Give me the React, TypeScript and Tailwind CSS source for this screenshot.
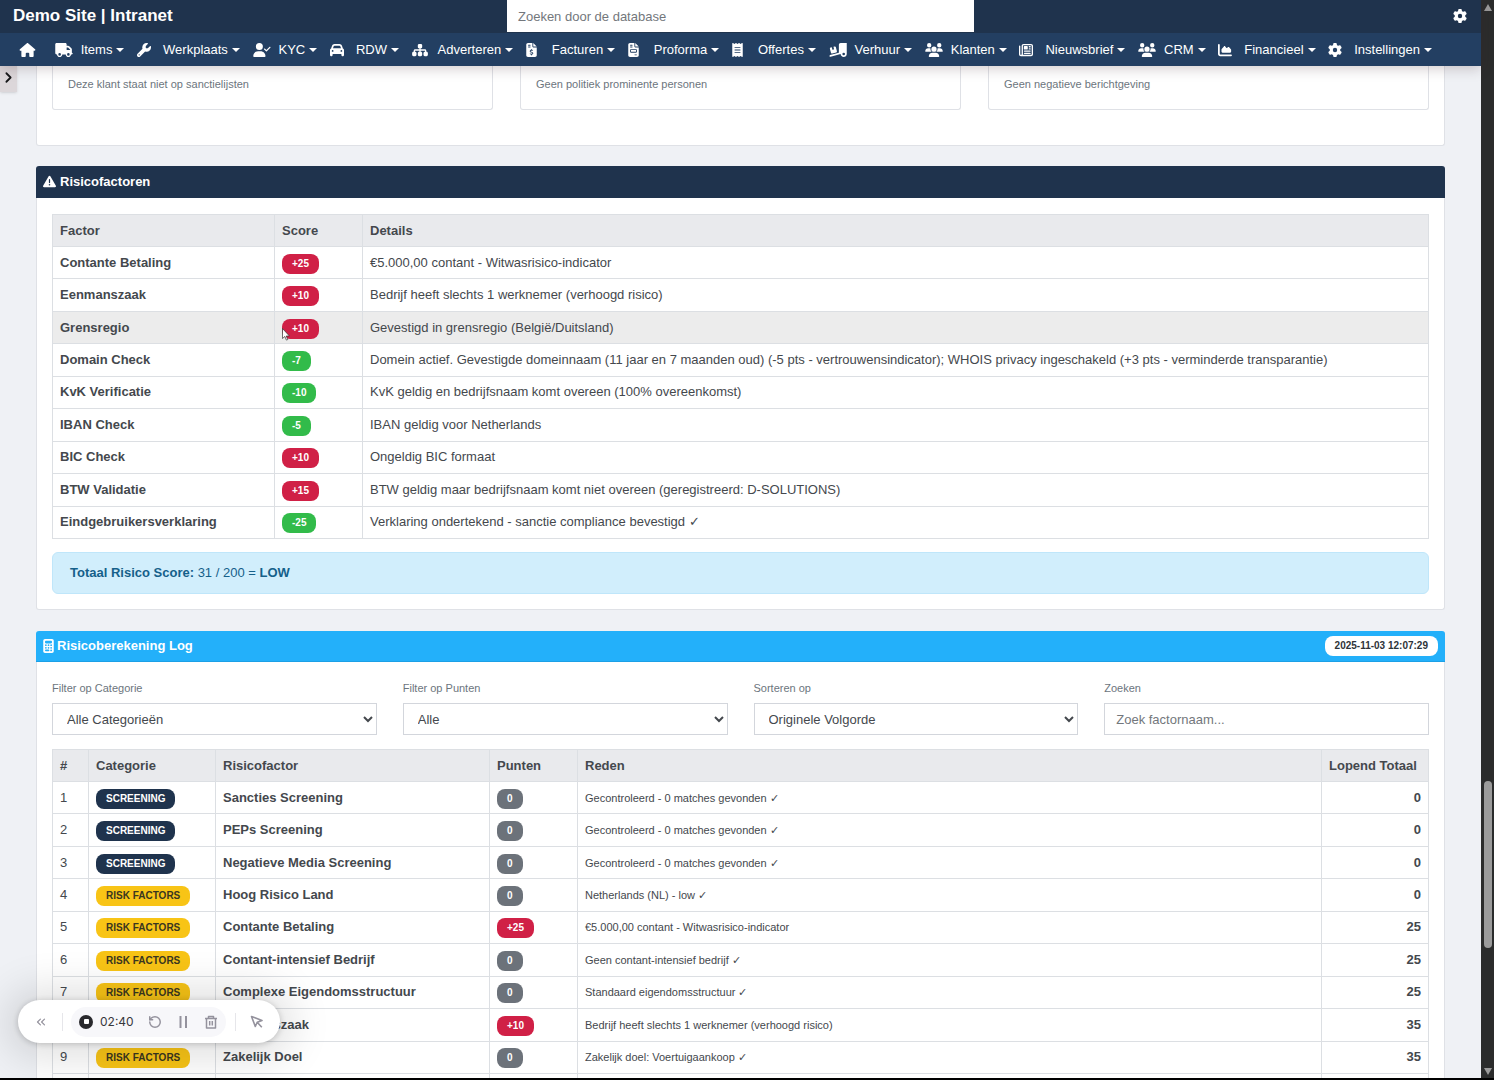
import { useState } from "react"
import type { ReactNode } from "react"
import type { IconType } from "react-icons"
import {
	FaCalculator, FaCar, FaChartArea, FaFileInvoice, FaFileInvoiceDollar, FaGear, FaHouse, FaReceipt, FaRegNewspaper,
	FaSitemap, FaTriangleExclamation, FaTruck, FaTruckRampBox, FaUserCheck, FaUsers, FaWrench,
} from "react-icons/fa6"
import { ChevronRight, ChevronsLeft, RotateCcw } from "lucide-react"

const wide = "h-[14px] w-[18px]"
const square = "h-[14px] w-[14px]"
const narrow = "h-[14px] w-[11px]"

const navItems: { label: string; icon: IconType; size: string }[] = [
	{ label: "Items", icon: FaTruck, size: wide },
	{ label: "Werkplaats", icon: FaWrench, size: square },
	{ label: "KYC", icon: FaUserCheck, size: wide },
	{ label: "RDW", icon: FaCar, size: square },
	{ label: "Adverteren", icon: FaSitemap, size: "h-[14px] w-[16px]" },
	{ label: "Facturen", icon: FaFileInvoiceDollar, size: narrow },
	{ label: "Proforma", icon: FaFileInvoice, size: narrow },
	{ label: "Offertes", icon: FaReceipt, size: narrow },
	{ label: "Verhuur", icon: FaTruckRampBox, size: wide },
	{ label: "Klanten", icon: FaUsers, size: wide },
	{ label: "Nieuwsbrief", icon: FaRegNewspaper, size: square },
	{ label: "CRM", icon: FaUsers, size: wide },
	{ label: "Financieel", icon: FaChartArea, size: square },
	{ label: "Instellingen", icon: FaGear, size: square },
]

const checks = [
	"Deze klant staat niet op sanctielijsten",
	"Geen politiek prominente personen",
	"Geen negatieve berichtgeving",
]

const factors = [
	{ name: "Contante Betaling", score: 25, details: "€5.000,00 contant - Witwasrisico-indicator" },
	{ name: "Eenmanszaak", score: 10, details: "Bedrijf heeft slechts 1 werknemer (verhoogd risico)" },
	{ name: "Grensregio", score: 10, details: "Gevestigd in grensregio (België/Duitsland)", active: true },
	{ name: "Domain Check", score: -7, details: "Domein actief. Gevestigde domeinnaam (11 jaar en 7 maanden oud) (-5 pts - vertrouwensindicator); WHOIS privacy ingeschakeld (+3 pts - verminderde transparantie)" },
	{ name: "KvK Verificatie", score: -10, details: "KvK geldig en bedrijfsnaam komt overeen (100% overeenkomst)" },
	{ name: "IBAN Check", score: -5, details: "IBAN geldig voor Netherlands" },
	{ name: "BIC Check", score: 10, details: "Ongeldig BIC formaat" },
	{ name: "BTW Validatie", score: 15, details: "BTW geldig maar bedrijfsnaam komt niet overeen (geregistreerd: D-SOLUTIONS)" },
	{ name: "Eindgebruikersverklaring", score: -25, details: "Verklaring ondertekend - sanctie compliance bevestigd ✓" },
]

const log = [
	{ category: "SCREENING", name: "Sancties Screening", points: 0, reason: "Gecontroleerd - 0 matches gevonden ✓", total: 0 },
	{ category: "SCREENING", name: "PEPs Screening", points: 0, reason: "Gecontroleerd - 0 matches gevonden ✓", total: 0 },
	{ category: "SCREENING", name: "Negatieve Media Screening", points: 0, reason: "Gecontroleerd - 0 matches gevonden ✓", total: 0 },
	{ category: "RISK FACTORS", name: "Hoog Risico Land", points: 0, reason: "Netherlands (NL) - low ✓", total: 0 },
	{ category: "RISK FACTORS", name: "Contante Betaling", points: 25, reason: "€5.000,00 contant - Witwasrisico-indicator", total: 25 },
	{ category: "RISK FACTORS", name: "Contant-intensief Bedrijf", points: 0, reason: "Geen contant-intensief bedrijf ✓", total: 25 },
	{ category: "RISK FACTORS", name: "Complexe Eigendomsstructuur", points: 0, reason: "Standaard eigendomsstructuur ✓", total: 25 },
	{ category: "RISK FACTORS", name: "Eenmanszaak", points: 10, reason: "Bedrijf heeft slechts 1 werknemer (verhoogd risico)", total: 35 },
	{ category: "RISK FACTORS", name: "Zakelijk Doel", points: 0, reason: "Zakelijk doel: Voertuigaankoop ✓", total: 35 },
]

const cell = "border border-[#dcdfe3] px-[7px] text-left align-middle"

function Badge({ color, children }: { color: string; children: ReactNode }) {
	return <span className={`block w-fit rounded-[8px] px-[10px] text-[10px] font-bold leading-[20px] ${color}`}>{children}</span>
}

function Score({ value }: { value: number }) {
	const color = value > 0 ? "bg-[#d02046] text-white" : value < 0 ? "bg-[#32bb4a] text-white" : "bg-[#6c727a] text-white"
	return <Badge color={color}>{value > 0 ? `+${value}` : value}</Badge>
}

function Header() {
	return (
		<header className="relative z-10 text-white shadow-[0_3px_12px_rgba(60,30,40,0.22)]">
			<div className="grid h-[33px] grid-cols-3 bg-[#1f334d]">
				<a href="#" className="pl-[13px] text-[17px] font-bold leading-8">Demo Site | Intranet</a>
				<input type="search" aria-label="Zoeken door de database" placeholder="Zoeken door de database" className="mx-auto h-8 w-[467px] bg-white px-[11px] text-[#444a50] outline-none placeholder:text-[#73777c]" />
				<button type="button" aria-label="Instellingen" className="mr-[14px] flex h-8 items-center justify-self-end"><FaGear size={14} /></button>
			</div>
			<nav className="flex h-[33px] items-center justify-between bg-[#233f62] pl-[19px] pr-[49px]">
				<a href="#" aria-label="Home" className="w-[23px]"><FaHouse className="h-[14px] w-[17px]" /></a>
				{navItems.map(({ label, icon: Icon, size }) => (
					<a key={label} href="#" className="flex items-center">
						<span className="flex w-[26px]"><Icon className={size} /></span>
						{label}
						<span className="ml-1 border-x-4 border-t-4 border-x-transparent border-t-white"></span>
					</a>
				))}
			</nav>
		</header>
	)
}

function FactorTable() {
	return (
		<table className="h-[325px] w-full table-fixed border-collapse">
			<thead className="bg-[#e9eaed]">
				<tr className="h-8">
					<th className={`${cell} w-[222px]`}>Factor</th>
					<th className={`${cell} w-[88px]`}>Score</th>
					<th className={cell}>Details</th>
				</tr>
			</thead>
			<tbody>
				{factors.map((f) => (
					<tr key={f.name} className={f.active ? "bg-[#ececec]" : ""}>
						<td className={`${cell} font-bold`}>{f.name}</td>
						<td className={`${cell} pt-0.5`}><Score value={f.score} /></td>
						<td className={cell}>{f.details}</td>
					</tr>
				))}
			</tbody>
		</table>
	)
}

function LogTable() {
	return (
		<table className="h-[357px] w-full table-fixed border-collapse">
			<thead className="bg-[#e9eaed]">
				<tr className="h-8">
					<th className={`${cell} w-9`}>#</th>
					<th className={`${cell} w-[127px]`}>Categorie</th>
					<th className={`${cell} w-[274px]`}>Risicofactor</th>
					<th className={`${cell} w-[88px]`}>Punten</th>
					<th className={cell}>Reden</th>
					<th className={`${cell} w-[107px] whitespace-nowrap`}>Lopend Totaal</th>
				</tr>
			</thead>
			<tbody>
				{log.map((row, i) => (
					<tr key={row.name}>
						<td className={cell}>{i + 1}</td>
						<td className={`${cell} pt-0.5`}>
							<Badge color={row.category === "SCREENING" ? "bg-[#1f334d] text-white" : "bg-[#f8c416] text-[#3a3620]"}>{row.category}</Badge>
						</td>
						<td className={`${cell} font-bold`}>{row.name}</td>
						<td className={`${cell} pt-0.5`}><Score value={row.points} /></td>
						<td className={`${cell} text-[11px]`}>{row.reason}</td>
						<td className={`${cell} font-bold`}><div className="text-right">{row.total}</div></td>
					</tr>
				))}
				<tr className="h-8">
					{[0, 1, 2, 3, 4, 5].map((n) => <td key={n} className={cell}></td>)}
				</tr>
			</tbody>
		</table>
	)
}

function Select({ id, label, options }: { id: string; label: string; options: string[] }) {
	return (
		<div>
			<label htmlFor={id} className="block text-[11px] leading-4 text-[#6c757d]">{label}</label>
			<select id={id} className="mt-[7px] h-8 w-full border border-[#d3d6dc] bg-white pl-[10px]">
				{options.map((o) => <option key={o}>{o}</option>)}
			</select>
		</div>
	)
}

function Recorder() {
	return (
		<div className="absolute bottom-[35px] left-[18px] z-20 flex h-[43px] w-[262px] items-center rounded-full bg-white text-[#94929d] shadow-[0_2px_40px_14px_rgba(0,0,0,0.12),0_1px_6px_rgba(0,0,0,0.2)]">
			<button type="button" aria-label="Inklappen" className="ml-4"><ChevronsLeft size={14} /></button>
			<span className="ml-[14px] h-[18px] w-px bg-[#e6e6ea]"></span>
			<div className="ml-2 flex h-[30px] items-center rounded-full bg-[#f7f7fa] px-2">
				<button type="button" aria-label="Stop" className="flex size-[14px] items-center justify-center rounded-full bg-[#29292d]"><span className="size-[5px] rounded-[1px] bg-white"></span></button>
				<span className="ml-[7px] w-[34px] font-[Inter,sans-serif] text-[12px] text-[#37373c]">02:40</span>
				<button type="button" aria-label="Opnieuw" className="ml-[14px]"><RotateCcw size={14} strokeWidth={2.5} /></button>
				<button type="button" aria-label="Pauze" className="ml-[14px]">
					<svg width="14" height="14" viewBox="0 0 14 14" fill="none" stroke="currentColor" strokeWidth="2">
						<path d="M4.5 1v12M10 1v12" />
					</svg>
				</button>
				<button type="button" aria-label="Verwijderen" className="ml-[14px]">
					<svg width="14" height="14" viewBox="0 0 14 14" fill="none" stroke="currentColor" strokeWidth="1.5" strokeLinejoin="round">
						<path d="M1 3.5h12M4.5 3.5v-2h5v2M2.5 3.5v9.5h9v-9.5M5.7 6v4.5M8.3 6v4.5" />
					</svg>
				</button>
			</div>
			<span className="ml-[9px] h-[18px] w-px bg-[#e6e6ea]"></span>
			<button type="button" aria-label="Aanwijzer" className="ml-[14px]">
				<svg width="14" height="14" viewBox="0 0 14 14" fill="none" stroke="currentColor" strokeWidth="1.6" strokeLinejoin="round">
					<path d="M1.5 1.5l3.8 10 1.9-4.3 4.8-1.8zM7.2 7.2l4.6 5" />
				</svg>
			</button>
		</div>
	)
}

export default function App() {
	const [query, setQuery] = useState("")

	return (
		<div className="relative flex h-screen overflow-hidden border-b-2 border-black bg-[#eff1f5] font-['Liberation_Sans',Arial,sans-serif] text-[13px] leading-[20px] text-[#44484d]">
			<div className="min-w-0 flex-1">
				<Header />
				<main className="relative px-9">
					<button type="button" aria-label="Menu openen" className="absolute left-0 top-0 flex h-[26px] w-[17px] items-center justify-center bg-[#dcd7da] pb-1 text-[#17181a] shadow-sm"><ChevronRight size={17} strokeWidth={2.5} /></button>

					<section className="rounded-b-[3px] border border-t-0 border-[#dfe1e6] bg-white px-[15px] pb-[35px]">
						<div className="grid grid-cols-3 gap-[27px]">
							{checks.map((text) => (
								<div key={text} className="rounded-b-[3px] border border-t-0 border-[#dfe1e6] px-[15px] pb-4 pt-[9px] text-[11px] leading-[18px] text-[#6c757d]">{text}</div>
							))}
						</div>
					</section>

					<section className="mt-5 rounded-[3px] border border-t-0 border-[#dfe1e6] bg-white">
						<h2 className="-mx-px flex h-8 items-center gap-1 rounded-t-[3px] bg-[#1f334d] px-[7px] pb-px font-bold text-white"><FaTriangleExclamation size={13} /> Risicofactoren</h2>
						<div className="px-[15px] pb-[15px] pt-4">
							<FactorTable />
							<div className="mt-[13px] rounded-[6px] border border-[#bfe6fa] bg-[#d1eefc] px-[17px] py-[10px] text-[#15608a]">
								<strong>Totaal Risico Score:</strong> 31 / 200 = <strong>LOW</strong>
							</div>
						</div>
					</section>

					<section className="mt-[21px] rounded-[3px] border border-t-0 border-[#dfe1e6] bg-white">
						<h2 className="-mx-px flex h-[31px] items-center gap-[3px] rounded-t-[3px] border-b border-[#1ca0e6] bg-[#23b0fa] px-[7px] font-bold text-white">
							<FaCalculator size={14} className="w-[11px]" /> Risicoberekening Log
							<span className="ml-auto"><Badge color="bg-white text-[#2e3338]">2025-11-03 12:07:29</Badge></span>
						</h2>
						<div className="px-[15px] pb-4 pt-[18px]">
							<div className="mb-[14px] grid grid-cols-4 gap-[26px]">
								<Select id="category" label="Filter op Categorie" options={["Alle Categorieën", "SCREENING", "RISK FACTORS"]} />
								<Select id="points" label="Filter op Punten" options={["Alle"]} />
								<Select id="sort" label="Sorteren op" options={["Originele Volgorde"]} />
								<div>
									<label htmlFor="search" className="block text-[11px] leading-4 text-[#6c757d]">Zoeken</label>
									<input id="search" value={query} onChange={(e) => setQuery(e.target.value)} placeholder="Zoek factornaam..." className="mt-[7px] h-8 w-full border border-[#d3d6dc] bg-white px-[11px] placeholder:text-[#73777c]" />
								</div>
							</div>
							<LogTable />
						</div>
					</section>
				</main>
			</div>

			<div className="flex w-[13px] flex-col items-center bg-[#2b2c2c]">
				<span className="mt-1 border-x-4 border-b-[7px] border-x-transparent border-b-[#9b9b9b]"></span>
				<span className="mt-[770px] h-[167px] w-2 rounded-full bg-[#9b9b9b]"></span>
				<span className="mb-[3px] mt-auto border-x-4 border-t-[7px] border-x-transparent border-t-[#9b9b9b]"></span>
			</div>

			<svg className="absolute left-[282px] top-[328px] z-20" width="9" height="13" viewBox="0 0 9 13" fill="white" stroke="#333" strokeWidth="0.7">
				<path d="M0.5 0.5v10l2.3-2 1.6 3.6 1.4-.6-1.6-3.5h3.2z" />
			</svg>
			<Recorder />
		</div>
	)
}
